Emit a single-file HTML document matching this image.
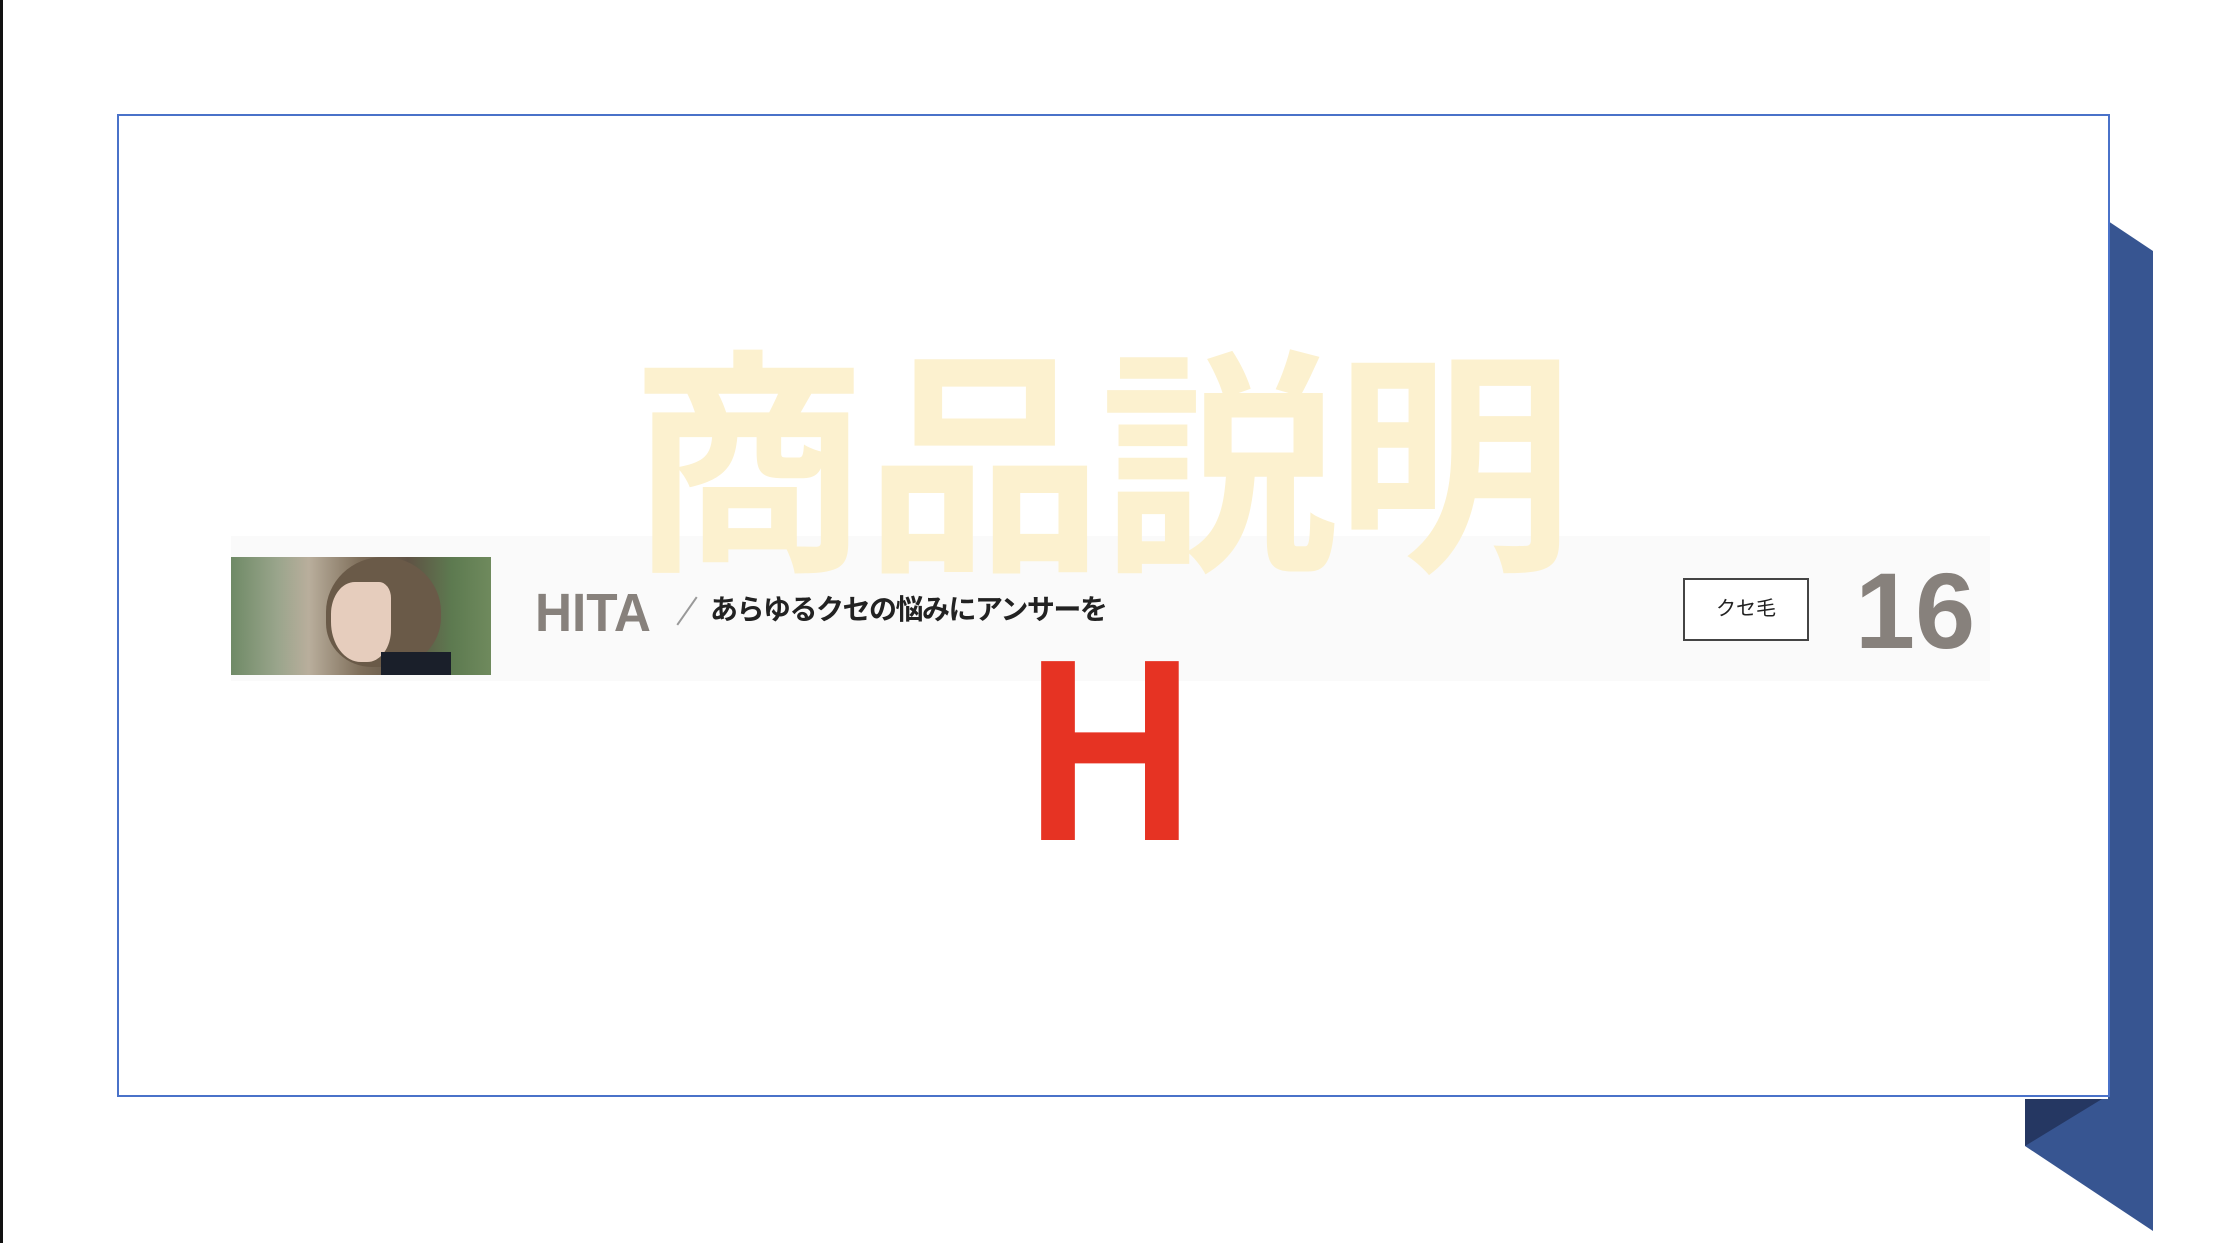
<!DOCTYPE html>
<html><head><meta charset="utf-8"><style>
html,body{margin:0;padding:0;width:2224px;height:1243px;overflow:hidden;background:#fff;position:relative}
div{position:absolute}
.jp{font-family:"Liberation Sans","Noto Sans CJK JP",sans-serif}
</style></head><body>
<div style="left:0;top:0;width:3px;height:1243px;background:#111"></div>
<svg width="2224" height="1243" style="position:absolute;left:0;top:0">
<polygon points="2108,221 2153,251 2153,1231 2025,1146 2025,1099 2108,1099" fill="#375591"/>
<polygon points="2025,1099 2102,1099 2025,1146" fill="#253762"/>
</svg>
<div style="left:117px;top:114px;width:1989px;height:979px;border:2px solid #4a72c9;background:#fff"></div>
<div style="left:231px;top:536px;width:1759px;height:145px;background:#fafafa"></div>
<div style="left:231px;top:557px;width:260px;height:118px;overflow:hidden;background:linear-gradient(90deg,#6f8a66 0%,#9aa58c 18%,#b9ae9c 30%,#7e6e5a 50%,#5f5244 68%,#5d7a50 85%,#6f8a5d 100%)">
<div style="left:95px;top:0;width:115px;height:110px;background:#6a5a48;border-radius:50% 50% 45% 40%"></div>
<div style="left:100px;top:25px;width:60px;height:80px;background:#e6cdbd;border-radius:40% 20% 40% 50%"></div>
<div style="left:150px;top:95px;width:70px;height:30px;background:#1a1f2a"></div>
</div>
<div class="jp" style="left:630px;top:352px;font-size:238px;line-height:1;font-weight:700;color:#fcf1cf;letter-spacing:-3px;white-space:nowrap">商品説明</div>
<div style="left:535px;top:586px;font-family:'Liberation Sans Narrow','Liberation Sans',sans-serif;font-weight:700;font-size:54px;line-height:1;color:#87817c;transform:scaleX(0.95);transform-origin:left">HITA</div>
<div style="left:686px;top:594px;width:2px;height:34px;background:#999;transform:rotate(35deg)"></div>
<div class="jp" style="left:710px;top:594px;font-size:28px;line-height:32px;font-weight:700;color:#222;white-space:nowrap;letter-spacing:-1.5px">あらゆるクセの悩みにアンサーを</div>
<div class="jp" style="left:1683px;top:578px;width:122px;height:59px;border:2px solid #444;background:#fff;font-size:20px;line-height:59px;text-align:center;color:#222">クセ毛</div>
<div style="left:1855px;top:557px;font-family:'Liberation Sans',sans-serif;font-weight:700;font-size:108px;line-height:1;color:#87817c">16</div>
<div style="left:1010px;top:621px;width:200px;text-align:center;font-family:'Liberation Sans',sans-serif;font-weight:700;font-size:260px;line-height:1;color:#e63323;transform:scaleX(0.9)">H</div>
</body></html>
